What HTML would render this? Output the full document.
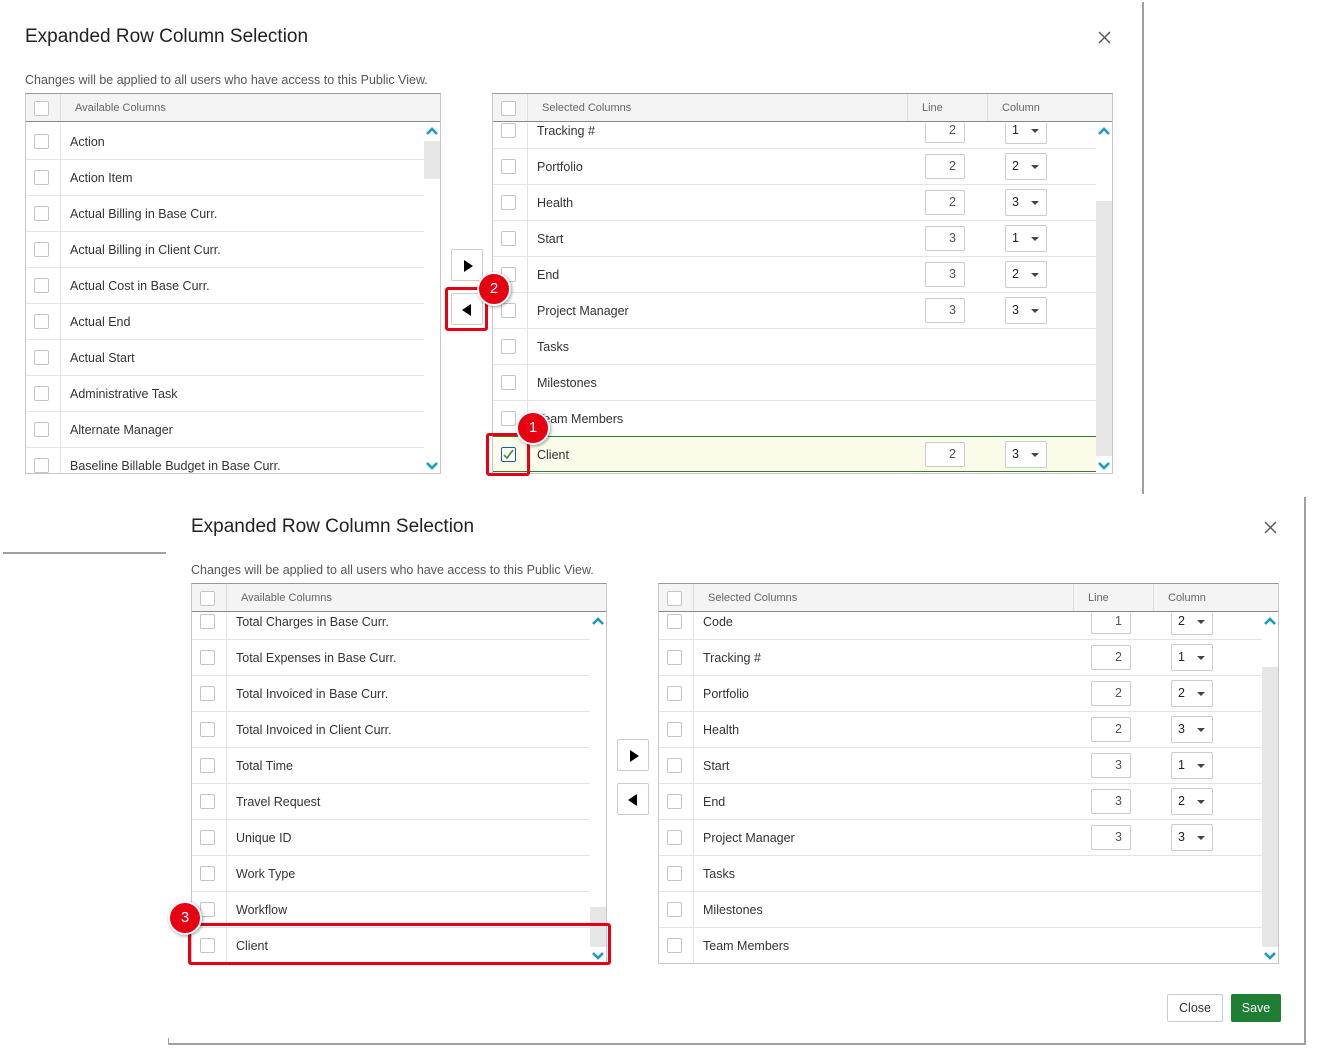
<!DOCTYPE html>
<html><head><meta charset="utf-8"><style>
*{box-sizing:border-box;margin:0;padding:0}
body{width:1318px;height:1056px;background:#fff;position:relative;overflow:hidden;font-family:"Liberation Sans",sans-serif;color:#333}
.a{position:absolute}
.title{font-size:19px;color:#222}
.sub{font-size:12.5px;color:#555}
.tbl{position:absolute;border:1px solid #c8c8c8;border-top:1px solid #999;background:#fff;overflow:hidden}
.hd{position:absolute;left:0;right:0;top:0;height:28px;background:#f4f4f4;border-bottom:1px solid #888;font-size:11px;color:#666}
.hd span{position:absolute;top:0;line-height:28px}
.hd .dv{position:absolute;top:0;bottom:0;width:1px;background:#ddd}
.body{position:absolute;top:29px;left:0;right:0;bottom:0;overflow:hidden}
.rows{position:absolute;left:0;right:16px}
.r{height:36px;border-bottom:1px solid #e4e4e4;position:relative}
.r::before{content:"";position:absolute;left:34px;top:0;bottom:0;width:1px;background:#e4e4e4}
.cb{position:absolute;left:8px;top:10px;width:15px;height:15px;border:1px solid #c4c4c4;border-radius:2px;background:#fff}
.hd .cb{top:7px}
.t{position:absolute;left:44px;top:1px;line-height:35px;font-size:12.5px;color:#333}
.ln{position:absolute;top:5px;width:40px;height:25px;border:1px solid #ccc;border-radius:2px;text-align:right;padding-right:8px;line-height:23px;font-size:12.5px;color:#555;background:#fff}
.sel{position:absolute;top:4px;width:42px;height:27px;border:1px solid #ccc;border-radius:2px;line-height:25px;padding-left:6px;font-size:12.5px;color:#222;background:#fff}
.sel::after{content:"";position:absolute;right:7px;top:11px;border-left:4px solid transparent;border-right:4px solid transparent;border-top:4px solid #444}
.sb{position:absolute;right:0;top:0;bottom:0;width:16px;background:#fff}
.th{position:absolute;right:0;width:16px;background:#e6e6e6}
.up,.dn{position:absolute;right:2px;width:12px;height:10px}
.btn{position:absolute;width:32px;height:32px;border:1px solid #ccc;border-radius:2px;background:#fff}
.btn::after{content:"";position:absolute;top:10px}
.rt::after{left:12px;border-top:6px solid transparent;border-bottom:6px solid transparent;border-left:9px solid #000}
.lt::after{left:10px;border-top:6px solid transparent;border-bottom:6px solid transparent;border-right:9px solid #000}
.circ{position:absolute;width:34px;height:34px;border-radius:50%;background:#e60012;color:#fff;font-size:15px;text-align:center;line-height:30px;border:2px solid #fff;box-shadow:1px 1px 3px rgba(0,0,0,.4)}
.box{position:absolute;border:3px solid #e60012;border-radius:3px}
.g{position:absolute;background:#a0a0a0}
</style></head><body>

<!-- Top panel -->
<div class="a title" style="left:25px;top:26px">Expanded Row Column Selection</div>
<svg class="a" style="left:1098px;top:31px" width="13" height="13" viewBox="0 0 13 13"><path d="M1 1L12 12M12 1L1 12" stroke="#555" stroke-width="1.4"/></svg>
<div class="a sub" style="left:25px;top:73px">Changes will be applied to all users who have access to this Public View.</div>
<div class="g" style="left:1142px;top:2px;width:2px;height:492px"></div>
<div class="g" style="left:3px;top:552px;width:163px;height:2px"></div>

<div class="tbl" style="left:25px;top:93px;width:416px;height:381px">
 <div class="hd"><div class="cb"></div><div class="dv" style="left:34px"></div><span style="left:49px">Available Columns</span></div>
 <div class="body">
  <div class="rows" style="top:1px">
   <div class="r"><div class="cb"></div><div class="t">Action</div></div>
   <div class="r"><div class="cb"></div><div class="t">Action Item</div></div>
   <div class="r"><div class="cb"></div><div class="t">Actual Billing in Base Curr.</div></div>
   <div class="r"><div class="cb"></div><div class="t">Actual Billing in Client Curr.</div></div>
   <div class="r"><div class="cb"></div><div class="t">Actual Cost in Base Curr.</div></div>
   <div class="r"><div class="cb"></div><div class="t">Actual End</div></div>
   <div class="r"><div class="cb"></div><div class="t">Actual Start</div></div>
   <div class="r"><div class="cb"></div><div class="t">Administrative Task</div></div>
   <div class="r"><div class="cb"></div><div class="t">Alternate Manager</div></div>
   <div class="r"><div class="cb"></div><div class="t">Baseline Billable Budget in Base Curr.</div></div>
  </div>
  <div class="sb"><div class="th" style="top:18px;height:38px"></div>
   <svg class="up" style="top:3px" viewBox="0 0 12 10"><path d="M1 8 L6 3 L11 8" stroke="#1a9bc4" stroke-width="2.6" fill="none"/></svg>
   <svg class="dn" style="bottom:2px" viewBox="0 0 12 10"><path d="M1 2 L6 7 L11 2" stroke="#1a9bc4" stroke-width="2.6" fill="none"/></svg></div>
 </div>
</div>

<div class="btn rt" style="left:451px;top:249px"></div>
<div class="btn lt" style="left:451px;top:293px"></div>

<div class="tbl" style="left:492px;top:93px;width:621px;height:381px">
 <div class="hd"><div class="cb"></div><div class="dv" style="left:34px"></div><span style="left:49px">Selected Columns</span><div class="dv" style="left:414px"></div><span style="left:429px">Line</span><div class="dv" style="left:494px"></div><span style="left:509px">Column</span></div>
 <div class="body">
  <div class="rows" style="top:-10px">
   <div class="r"><div class="cb"></div><div class="t">Tracking #</div><div class="ln" style="left:432px">2</div><div class="sel" style="left:512px">1</div></div>
   <div class="r"><div class="cb"></div><div class="t">Portfolio</div><div class="ln" style="left:432px">2</div><div class="sel" style="left:512px">2</div></div>
   <div class="r"><div class="cb"></div><div class="t">Health</div><div class="ln" style="left:432px">2</div><div class="sel" style="left:512px">3</div></div>
   <div class="r"><div class="cb"></div><div class="t">Start</div><div class="ln" style="left:432px">3</div><div class="sel" style="left:512px">1</div></div>
   <div class="r"><div class="cb"></div><div class="t">End</div><div class="ln" style="left:432px">3</div><div class="sel" style="left:512px">2</div></div>
   <div class="r"><div class="cb"></div><div class="t">Project Manager</div><div class="ln" style="left:432px">3</div><div class="sel" style="left:512px">3</div></div>
   <div class="r"><div class="cb"></div><div class="t">Tasks</div></div>
   <div class="r"><div class="cb"></div><div class="t">Milestones</div></div>
   <div class="r"><div class="cb"></div><div class="t">Team Members</div></div>
   <div class="r" style="background:#fbfbea;border-top:1px solid #2e7d32;border-bottom:1px solid #2e7d32;margin-top:-1px"><div class="cb" style="border-color:#1e5aa0"><svg width="13" height="13" viewBox="0 0 13 13" style="position:absolute;left:0;top:0"><path d="M2 7 L5 10 L11 2" stroke="#4a9a2a" stroke-width="1.8" fill="none"/></svg></div><div class="t">Client</div><div class="ln" style="left:432px">2</div><div class="sel" style="left:512px">3</div></div>
  </div>
  <div class="sb"><div class="th" style="top:78px;height:255px"></div>
   <svg class="up" style="top:3px" viewBox="0 0 12 10"><path d="M1 8 L6 3 L11 8" stroke="#1a9bc4" stroke-width="2.6" fill="none"/></svg>
   <svg class="dn" style="bottom:2px" viewBox="0 0 12 10"><path d="M1 2 L6 7 L11 2" stroke="#1a9bc4" stroke-width="2.6" fill="none"/></svg></div>
 </div>
</div>

<div class="box" style="left:445px;top:287px;width:43px;height:44px"></div>
<div class="box" style="left:486px;top:433px;width:44px;height:43px"></div>
<div class="circ" style="left:477px;top:272px">2</div>
<div class="circ" style="left:516px;top:411px">1</div>

<!-- Bottom panel -->
<div class="a title" style="left:191px;top:516px">Expanded Row Column Selection</div>
<svg class="a" style="left:1264px;top:521px" width="13" height="13" viewBox="0 0 13 13"><path d="M1 1L12 12M12 1L1 12" stroke="#555" stroke-width="1.4"/></svg>
<div class="a sub" style="left:191px;top:563px">Changes will be applied to all users who have access to this Public View.</div>
<div class="g" style="left:1304px;top:497px;width:2px;height:548px"></div>
<div class="g" style="left:168px;top:1043px;width:1138px;height:2px"></div>
<div class="g" style="left:168px;top:1038px;width:1px;height:6px"></div>

<div class="tbl" style="left:191px;top:583px;width:416px;height:381px">
 <div class="hd"><div class="cb"></div><div class="dv" style="left:34px"></div><span style="left:49px">Available Columns</span></div>
 <div class="body">
  <div class="rows" style="top:-9px">
   <div class="r"><div class="cb"></div><div class="t">Total Charges in Base Curr.</div></div>
   <div class="r"><div class="cb"></div><div class="t">Total Expenses in Base Curr.</div></div>
   <div class="r"><div class="cb"></div><div class="t">Total Invoiced in Base Curr.</div></div>
   <div class="r"><div class="cb"></div><div class="t">Total Invoiced in Client Curr.</div></div>
   <div class="r"><div class="cb"></div><div class="t">Total Time</div></div>
   <div class="r"><div class="cb"></div><div class="t">Travel Request</div></div>
   <div class="r"><div class="cb"></div><div class="t">Unique ID</div></div>
   <div class="r"><div class="cb"></div><div class="t">Work Type</div></div>
   <div class="r"><div class="cb"></div><div class="t">Workflow</div></div>
   <div class="r"><div class="cb"></div><div class="t">Client</div></div>
  </div>
  <div class="sb"><div class="th" style="top:294px;height:40px"></div>
   <svg class="up" style="top:3px" viewBox="0 0 12 10"><path d="M1 8 L6 3 L11 8" stroke="#1a9bc4" stroke-width="2.6" fill="none"/></svg>
   <svg class="dn" style="bottom:2px" viewBox="0 0 12 10"><path d="M1 2 L6 7 L11 2" stroke="#1a9bc4" stroke-width="2.6" fill="none"/></svg></div>
 </div>
</div>

<div class="btn rt" style="left:617px;top:739px"></div>
<div class="btn lt" style="left:617px;top:783px"></div>

<div class="tbl" style="left:658px;top:583px;width:621px;height:381px">
 <div class="hd"><div class="cb"></div><div class="dv" style="left:34px"></div><span style="left:49px">Selected Columns</span><div class="dv" style="left:414px"></div><span style="left:429px">Line</span><div class="dv" style="left:494px"></div><span style="left:509px">Column</span></div>
 <div class="body">
  <div class="rows" style="top:-9px">
   <div class="r"><div class="cb"></div><div class="t">Code</div><div class="ln" style="left:432px">1</div><div class="sel" style="left:512px">2</div></div>
   <div class="r"><div class="cb"></div><div class="t">Tracking #</div><div class="ln" style="left:432px">2</div><div class="sel" style="left:512px">1</div></div>
   <div class="r"><div class="cb"></div><div class="t">Portfolio</div><div class="ln" style="left:432px">2</div><div class="sel" style="left:512px">2</div></div>
   <div class="r"><div class="cb"></div><div class="t">Health</div><div class="ln" style="left:432px">2</div><div class="sel" style="left:512px">3</div></div>
   <div class="r"><div class="cb"></div><div class="t">Start</div><div class="ln" style="left:432px">3</div><div class="sel" style="left:512px">1</div></div>
   <div class="r"><div class="cb"></div><div class="t">End</div><div class="ln" style="left:432px">3</div><div class="sel" style="left:512px">2</div></div>
   <div class="r"><div class="cb"></div><div class="t">Project Manager</div><div class="ln" style="left:432px">3</div><div class="sel" style="left:512px">3</div></div>
   <div class="r"><div class="cb"></div><div class="t">Tasks</div></div>
   <div class="r"><div class="cb"></div><div class="t">Milestones</div></div>
   <div class="r"><div class="cb"></div><div class="t">Team Members</div></div>
  </div>
  <div class="sb"><div class="th" style="top:54px;height:280px"></div>
   <svg class="up" style="top:3px" viewBox="0 0 12 10"><path d="M1 8 L6 3 L11 8" stroke="#1a9bc4" stroke-width="2.6" fill="none"/></svg>
   <svg class="dn" style="bottom:2px" viewBox="0 0 12 10"><path d="M1 2 L6 7 L11 2" stroke="#1a9bc4" stroke-width="2.6" fill="none"/></svg></div>
 </div>
</div>

<div class="box" style="left:188px;top:923px;width:423px;height:42px"></div>
<div class="circ" style="left:168px;top:901px">3</div>

<div class="a" style="left:1167px;top:994px;width:56px;height:28px;border:1px solid #ccc;border-radius:2px;font-size:12.5px;line-height:26px;text-align:center;color:#333">Close</div>
<div class="a" style="left:1231px;top:994px;width:50px;height:28px;background:#1e7e34;border-radius:2px;font-size:12.5px;line-height:28px;text-align:center;color:#fff">Save</div>
</body></html>
